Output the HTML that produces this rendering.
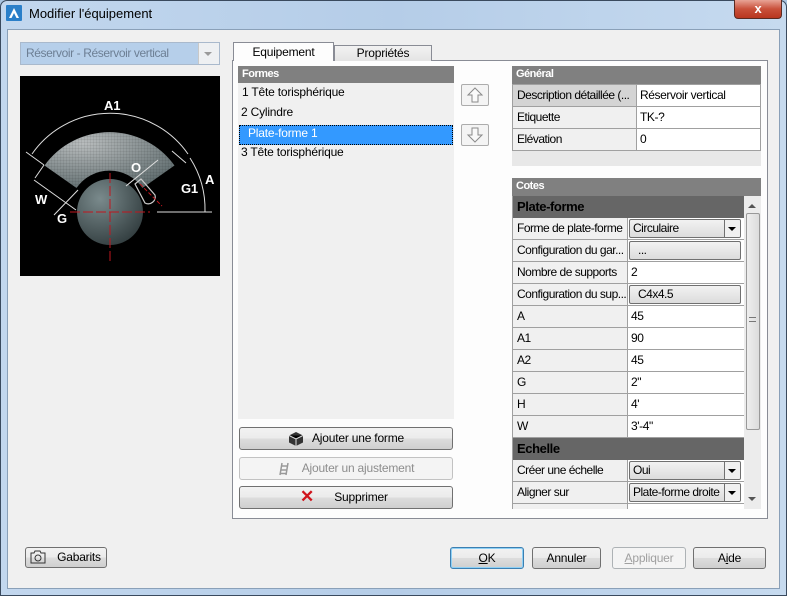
<!DOCTYPE html>
<html><head><meta charset="utf-8"><style>
*{box-sizing:border-box;margin:0;padding:0}
body{width:787px;height:596px;position:relative;overflow:hidden;font-family:"Liberation Sans",sans-serif;font-size:12px;color:#000;background:#a9c4e0;letter-spacing:-0.2px}
.a{position:absolute}
.btn{position:absolute;border:1px solid #707070;border-radius:3px;background:linear-gradient(#f2f2f2 0%,#ebebeb 50%,#dddddd 51%,#cfcfcf 100%);text-align:center;font-size:12px;line-height:20px}
.row{position:absolute;left:0;height:22px;border-bottom:1px solid #a0a0a0;width:100%}
.lab{position:absolute;left:0;top:0;height:21px;line-height:21px;padding-left:4px;background:#f0f0f0;border-right:1px solid #a0a0a0;font-size:12px;white-space:nowrap;overflow:hidden;letter-spacing:-0.5px}
.val{position:absolute;top:0;height:21px;line-height:21px;padding-left:3px;background:#fff;font-size:12px;letter-spacing:-0.4px}
.hdr{position:absolute;background:#808080;color:#fff;font-weight:bold;font-size:11px;line-height:17px;padding-left:4px;letter-spacing:-0.5px}
.cb{position:absolute;top:1px;height:19px;border:1px solid #707070;border-radius:2px;background:linear-gradient(#f2f2f2,#dcdcdc);line-height:17px;padding-left:3px;letter-spacing:-0.5px;white-space:nowrap;overflow:hidden}
</style></head><body>
<div class="a" style="left:0;top:0;width:787px;height:596px;border:1px solid #3a4a5e;border-radius:7px 7px 0 0;background:linear-gradient(90deg,#c2d7ee 0%,#b5cde8 50%,#c6daef 100%)"></div>
<div class="a" style="left:6px;top:5px;width:16px;height:16px"><svg width="16" height="16"><rect width="16" height="16" fill="#2a7fc9" rx="1"/><path d="M3 13 L8 3 L13 13 L10.5 13 L8 8 L5.5 13Z" fill="#fff"/></svg></div>
<div class="a" style="left:29px;top:6px;font-size:13px;color:#000;letter-spacing:0">Modifier l'équipement</div>
<div class="a" style="left:734px;top:0;width:48px;height:19px;border:1px solid #5a2a22;border-top:none;border-radius:0 0 4px 4px;background:linear-gradient(#e8a496,#c9503a 50%,#b8361f);color:#fff;text-align:center;font-weight:bold;font-size:13px;line-height:17px">x</div>
<div class="a" style="left:7px;top:29px;width:773px;height:560px;background:#f0f0f0;border:1px solid #8aa0b8"></div>
<div class="a" style="left:20px;top:42px;width:200px;height:23px;border:1px solid #a9b9cc;background:#b6cfea"></div>
<div class="a" style="left:26px;top:46px;color:#6d7f94;font-size:12px;letter-spacing:-0.4px">Réservoir - Réservoir vertical</div>
<div class="a" style="left:198px;top:43px;width:21px;height:21px;background:#eef0f2;border-left:1px solid #c8c8c8"></div>
<div class="a" style="left:204px;top:52px;width:0;height:0;border-left:4px solid transparent;border-right:4px solid transparent;border-top:4px solid #9a9a9a"></div>
<div class="a" style="left:20px;top:76px;width:200px;height:200px;background:#000">
<svg width="200" height="200" viewBox="0 0 200 200">
<defs><radialGradient id="g" cx="0.35" cy="0.3" r="0.8"><stop offset="0" stop-color="#7a8a8c"/><stop offset="1" stop-color="#2f3a3c"/></radialGradient>
<radialGradient id="s" cx="0.3" cy="0.2" r="0.9"><stop offset="0" stop-color="#b8bcbd"/><stop offset="1" stop-color="#5d6a6c"/></radialGradient>
<pattern id="p" width="3" height="3" patternUnits="userSpaceOnUse"><path d="M0 0H3M0 0V3" stroke="#000" stroke-opacity="0.25" stroke-width="0.5"/></pattern></defs>
<g transform="translate(-20,0)">
<path d="M44.5 89.5 A80 80 0 0 1 174.5 89.5 L142.5 112 A40 40 0 0 0 76.5 112 Z" fill="url(#s)"/>
<path d="M44.5 89.5 A80 80 0 0 1 174.5 89.5 L142.5 112 A40 40 0 0 0 76.5 112 Z" fill="url(#p)"/>
<circle cx="110" cy="136" r="33" fill="url(#g)"/>
<path d="M110 97 V186 M70 136 H150" stroke="#c0161e" stroke-width="1" stroke-dasharray="10 3"/>
<path d="M135 108 l6-5 14 16 a7 7 0 0 1 -10 8 Z" fill="none" stroke="#ccc" stroke-width="1.2"/>
<path d="M140 108 L162 130" stroke="#c0161e" stroke-width="1" stroke-dasharray="4 2"/>
<path d="M32 78 A95 95 0 0 1 188 78" fill="none" stroke="#ddd" stroke-width="1"/>
<path d="M190 82 A95 95 0 0 1 205 136" fill="none" stroke="#ddd"/>
<path d="M157 136 H212" stroke="#ddd"/>
<path d="M26 76 L44 89 M35 102 L44 89 M54 139 L78 114 M34 104 L76 134 M126 110 L158 84 M172 75 L186 87" stroke="#ddd"/>
</g>
<text x="84" y="34" fill="#fff" font-weight="bold" font-size="13" font-family="Liberation Sans">A1</text>
<text x="111" y="96" fill="#fff" font-weight="bold" font-size="13" font-family="Liberation Sans">O</text>
<text x="161" y="117" fill="#fff" font-weight="bold" font-size="13" font-family="Liberation Sans">G1</text>
<text x="185" y="108" fill="#fff" font-weight="bold" font-size="13" font-family="Liberation Sans">A</text>
<text x="15" y="128" fill="#fff" font-weight="bold" font-size="13" font-family="Liberation Sans">W</text>
<text x="37" y="147" fill="#fff" font-weight="bold" font-size="13" font-family="Liberation Sans">G</text>
</svg></div>
<div class="a" style="left:232px;top:60px;width:536px;height:459px;border:1px solid #898c95;background:#fdfdfd"></div>
<div class="a" style="left:233px;top:42px;width:101px;height:19px;border:1px solid #898c95;border-bottom:none;background:#fdfdfd;text-align:center;line-height:19px">Equipement</div>
<div class="a" style="left:334px;top:45px;width:98px;height:16px;border:1px solid #898c95;border-bottom:none;background:linear-gradient(#f2f2f2,#e4e4e4);text-align:center;line-height:15px">Propriétés</div>
<div class="a" style="left:238px;top:66px;width:216px;height:353px;background:#f0f0f0"></div>
<div class="hdr" style="left:238px;top:66px;width:216px;height:17px">Formes</div>
<div class="a" style="left:242px;top:85px">1 Tête torisphérique</div>
<div class="a" style="left:241px;top:105px">2 Cylindre</div>
<div class="a" style="left:239px;top:125px;width:214px;height:20px;background:#3399ff;border:1px dotted #000;color:#fff;padding-left:8px;line-height:14px">Plate-forme 1</div>
<div class="a" style="left:241px;top:145px">3 Tête torisphérique</div>
<div class="a" style="left:461px;top:84px;width:28px;height:22px;border:1px solid #acacac;border-radius:2px;background:#f4f4f4"><svg width="26" height="20"><path d="M13 3 L20 10 H16 V17 H10 V10 H6Z" fill="#fafafa" stroke="#8a8a8a"/></svg></div>
<div class="a" style="left:461px;top:124px;width:28px;height:22px;border:1px solid #acacac;border-radius:2px;background:#f4f4f4"><svg width="26" height="20"><path d="M13 17 L20 10 H16 V3 H10 V10 H6Z" fill="#fafafa" stroke="#8a8a8a"/></svg></div>
<div class="btn" style="left:239px;top:427px;width:214px;height:23px"><svg class="a" style="left:48px;top:3px" width="16" height="16"><path d="M8 1 L15 4.5 V11.5 L8 15 L1 11.5 V4.5Z" fill="#333"/><path d="M1 4.5 L8 8 L15 4.5 M8 8 V15" stroke="#ddd" stroke-width="1"/></svg><span style="margin-left:24px">Ajouter une forme</span></div>
<div class="btn" style="left:239px;top:457px;width:214px;height:23px;border-color:#c2c2c2;background:#f4f4f4;color:#8d8d8d"><svg class="a" style="left:38px;top:4px" width="12" height="14"><path d="M4 1 L2 13 M10 1 L8 13 M3.5 4 H9.5 M3 8 H9 M2.5 11.5 H8.5" stroke="#999" stroke-width="1.5"/></svg><span style="margin-left:24px">Ajouter un ajustement</span></div>
<div class="btn" style="left:239px;top:486px;width:214px;height:23px"><span class="a" style="left:60px;top:0;color:#d0141c;font-weight:bold;font-size:17px">✕</span><span style="margin-left:30px">Supprimer</span></div>
<div class="a" style="left:512px;top:66px;width:249px;height:100px;background:#e8e8e8"></div>
<div class="hdr" style="left:512px;top:66px;width:249px;height:18px">Général</div>
<div class="a" style="left:512px;top:84px;width:249px;height:67px;border:1px solid #a0a0a0;border-bottom:none">
<div class="row" style="top:0"><div class="lab" style="width:124px;background:#d4d4d4">Description détaillée (...</div><div class="val" style="left:124px;width:123px">Réservoir vertical</div></div>
<div class="row" style="top:22px"><div class="lab" style="width:124px">Etiquette</div><div class="val" style="left:124px;width:123px">TK-?</div></div>
<div class="row" style="top:44px"><div class="lab" style="width:124px">Elévation</div><div class="val" style="left:124px;width:123px">0</div></div>
</div>
<div class="hdr" style="left:512px;top:178px;width:249px;height:18px">Cotes</div>
<div class="a" style="left:512px;top:196px;width:249px;height:313px;border-left:1px solid #a0a0a0;overflow:hidden;background:#fff">
<div class="a" style="left:0;top:0;width:231px;height:22px;background:#666;color:#000;font-weight:bold;font-size:13px;line-height:22px;padding-left:4px;letter-spacing:-0.4px">Plate-forme</div>
<div class="row" style="top:22px;width:231px"><div class="lab" style="width:115px">Forme de plate-forme</div><div class="val" style="left:115px;width:116px"></div><div class="cb" style="left:116px;width:112px">Circulaire<span class="a" style="right:0;top:0;width:16px;height:17px;border-left:1px solid #707070;background:#f0f0f0"></span><span class="a" style="right:4px;top:7px;border-left:4px solid transparent;border-right:4px solid transparent;border-top:4px solid #000"></span></div></div>
<div class="row" style="top:44px;width:231px"><div class="lab" style="width:115px">Configuration du gar...</div><div class="val" style="left:115px;width:116px"></div><div class="cb" style="left:116px;width:112px;padding-left:8px">...</div></div>
<div class="row" style="top:66px;width:231px"><div class="lab" style="width:115px">Nombre de supports</div><div class="val" style="left:115px;width:116px">2</div></div>
<div class="row" style="top:88px;width:231px"><div class="lab" style="width:115px">Configuration du sup...</div><div class="val" style="left:115px;width:116px"></div><div class="cb" style="left:116px;width:112px;padding-left:8px">C4x4.5</div></div>
<div class="row" style="top:110px;width:231px"><div class="lab" style="width:115px">A</div><div class="val" style="left:115px;width:116px">45</div></div>
<div class="row" style="top:132px;width:231px"><div class="lab" style="width:115px">A1</div><div class="val" style="left:115px;width:116px">90</div></div>
<div class="row" style="top:154px;width:231px"><div class="lab" style="width:115px">A2</div><div class="val" style="left:115px;width:116px">45</div></div>
<div class="row" style="top:176px;width:231px"><div class="lab" style="width:115px">G</div><div class="val" style="left:115px;width:116px">2"</div></div>
<div class="row" style="top:198px;width:231px"><div class="lab" style="width:115px">H</div><div class="val" style="left:115px;width:116px">4'</div></div>
<div class="row" style="top:220px;width:231px"><div class="lab" style="width:115px">W</div><div class="val" style="left:115px;width:116px">3'-4"</div></div>
<div class="a" style="left:0;top:242px;width:231px;height:22px;background:#666;font-weight:bold;font-size:13px;line-height:22px;padding-left:4px;letter-spacing:-0.4px">Echelle</div>
<div class="row" style="top:264px;width:231px"><div class="lab" style="width:115px">Créer une échelle</div><div class="val" style="left:115px;width:116px"></div><div class="cb" style="left:116px;width:112px">Oui<span class="a" style="right:0;top:0;width:16px;height:17px;border-left:1px solid #707070;background:#f0f0f0"></span><span class="a" style="right:4px;top:7px;border-left:4px solid transparent;border-right:4px solid transparent;border-top:4px solid #000"></span></div></div>
<div class="row" style="top:286px;width:231px"><div class="lab" style="width:115px">Aligner sur</div><div class="val" style="left:115px;width:116px"></div><div class="cb" style="left:116px;width:112px">Plate-forme droite<span class="a" style="right:0;top:0;width:16px;height:17px;border-left:1px solid #707070;background:#f0f0f0"></span><span class="a" style="right:4px;top:7px;border-left:4px solid transparent;border-right:4px solid transparent;border-top:4px solid #000"></span></div></div>
<div class="row" style="top:308px;width:231px"><div class="lab" style="width:115px"></div></div>
<div class="a" style="left:231px;top:0;width:17px;height:313px;background:#ececec"></div>
<div class="a" style="left:235px;top:8px;border-left:4px solid transparent;border-right:4px solid transparent;border-bottom:4px solid #555"></div>
<div class="a" style="left:233px;top:17px;width:14px;height:217px;border:1px solid #999;border-radius:2px;background:linear-gradient(90deg,#eee,#dcdcdc)"></div>
<div class="a" style="left:236px;top:121px;width:7px;height:5px;border-top:1px solid #777;border-bottom:1px solid #777"></div>
<div class="a" style="left:235px;top:301px;border-left:4px solid transparent;border-right:4px solid transparent;border-top:4px solid #555"></div>
</div>
<div class="btn" style="left:25px;top:547px;width:82px;height:21px;line-height:19px"><svg class="a" style="left:4px;top:2px" width="16" height="14"><path d="M1 3 H4 L5 1 H10 L11 3 H15 V13 H1Z" fill="none" stroke="#333"/><circle cx="8" cy="8" r="3" fill="none" stroke="#333"/></svg><span style="margin-left:26px">Gabarits</span></div>
<div class="btn" style="left:450px;top:547px;width:74px;height:22px;border-color:#3c7fb1;box-shadow:inset 0 0 0 1px #8ed0f5"><u>O</u>K</div>
<div class="btn" style="left:532px;top:547px;width:69px;height:22px">Annuler</div>
<div class="btn" style="left:612px;top:547px;width:74px;height:22px;border-color:#adb2b5;background:#f4f4f4;color:#a0a0a0"><u>A</u>ppliquer</div>
<div class="btn" style="left:693px;top:547px;width:73px;height:22px">A<u>i</u>de</div>
</body></html>
